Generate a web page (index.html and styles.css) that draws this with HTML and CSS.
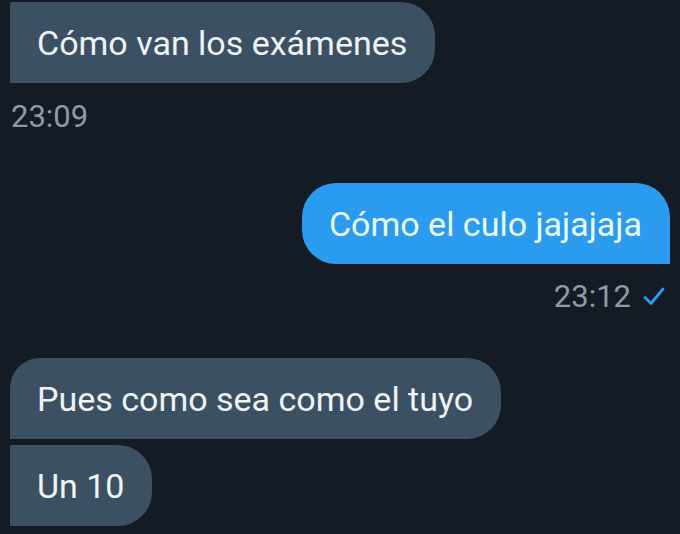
FILE: index.html
```html
<!DOCTYPE html>
<html lang="es">
<head>
<meta charset="utf-8">
<link rel="stylesheet" href="styles.css">
</head>
<body>
<div class="chat">
  <div class="bubble in first">Cómo van los exámenes</div>
  <div class="time in-time">23:09</div>
  <div class="bubble out">Cómo el culo jajajaja</div>
  <div class="time out-time">23:12
    <svg class="check" viewBox="0 0 24 24" width="28" height="24"><path d="M3 12.5 L9 18.5 L21 4" fill="none" stroke="#2b9ded" stroke-width="2.8" stroke-linecap="round" stroke-linejoin="round"/></svg>
  </div>
  <div class="bubble in group-top">Pues como sea como el tuyo</div>
  <div class="bubble in group-bottom">Un 10</div>
</div>
</body>
</html>
```
FILE: styles.css
```css
html, body {
  margin: 0;
  padding: 0;
  background: #141b25;
  width: 680px;
  height: 534px;
  overflow: hidden;
}
.chat {
  display: flex;
  flex-direction: column;
  padding: 2px 10px 0 10px;
  font-family: Roboto, "Liberation Sans", sans-serif;
}
.bubble {
  height: 81px;
  box-sizing: border-box;
  padding: 0 28px 0 27px;
  display: flex;
  align-items: center;
  font-size: 34px;
  white-space: nowrap;
}
.in {
  align-self: flex-start;
  background: #3c5063;
  color: #eef3f6;
}
.first {
  border-radius: 2px 34px 34px 0;
}
.out {
  align-self: flex-end;
  background: #2a9bee;
  color: #e9fbff;
  margin-top: 48px;
  border-radius: 34px 34px 0 34px;
}
.time {
  font-size: 31px;
  line-height: 36px;
  color: #8d9aa7;
  display: flex;
  align-items: center;
}
.in-time {
  margin-top: 16px;
  padding-left: 1px;
}
.out-time {
  align-self: flex-end;
  margin-top: 15px;
  gap: 9px;
  padding-right: 2px;
}
.check {
  display: block;
}
.group-top {
  margin-top: 43px;
  border-radius: 30px 34px 34px 0;
}
.group-bottom {
  margin-top: 6px;
  border-radius: 2px 34px 34px 0;
}
```
